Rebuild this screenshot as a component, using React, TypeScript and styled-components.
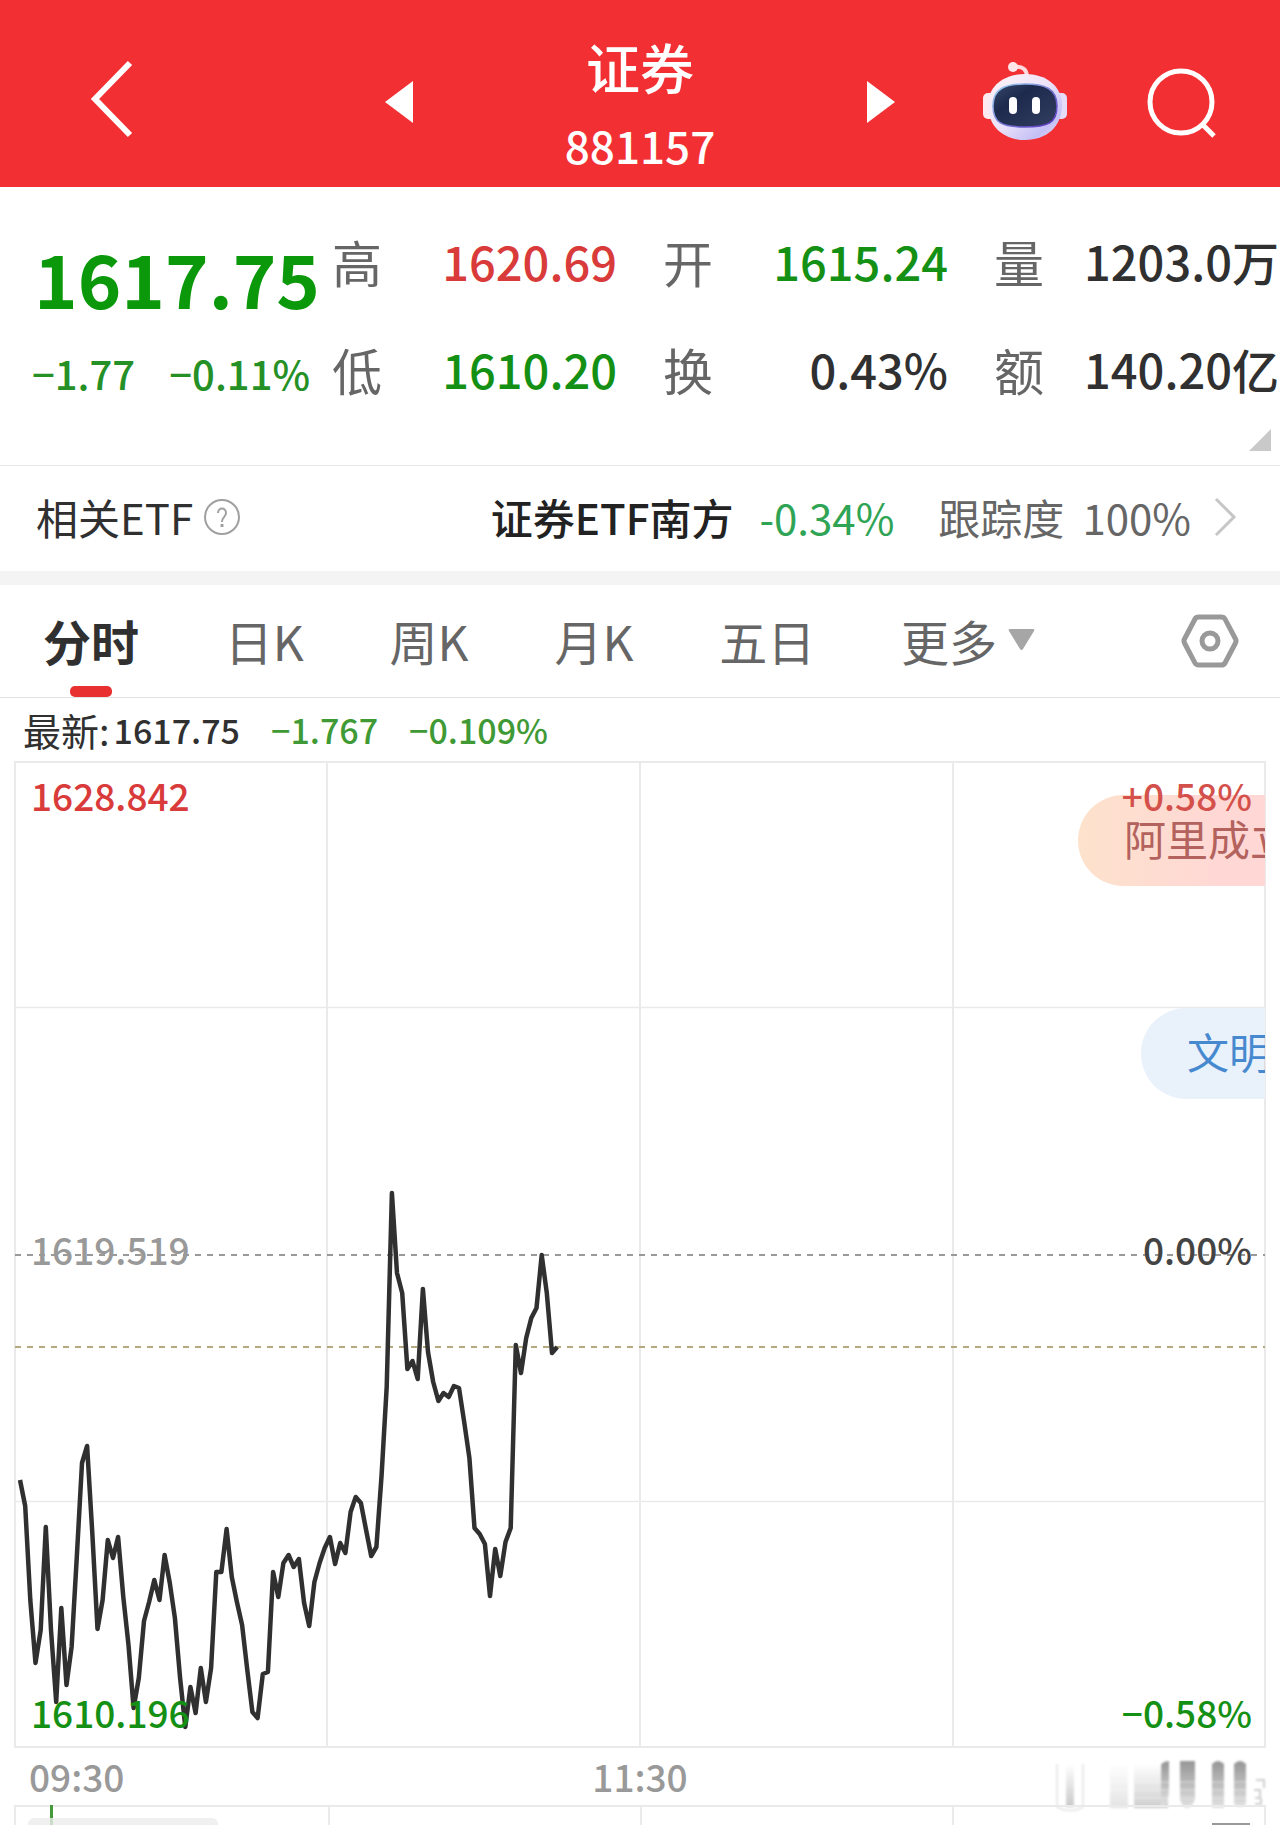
import React, { useState } from "react";
import styled, { createGlobalStyle } from "styled-components";

const color = {
  brand: "#f23034",
  ink: "#303030",
  label: "#666666",
  muted: "#999999",
  up: "#d93a3a",
  down: "#149014",
  downSoft: "#3f9a35",
  grid: "#eaeaea",
};

const GlobalStyle = createGlobalStyle`
  *, *::before, *::after { box-sizing: border-box; }
  body {
    margin: 0;
    background: #fff;
    color: ${color.ink};
    font-family: "Noto Sans CJK SC", "Noto Sans", sans-serif;
  }
  button {
    margin: 0;
    padding: 0;
    border: 0;
    background: none;
    color: inherit;
    font: inherit;
    cursor: pointer;
  }
  svg { display: block; }
  h1, p, dl, dt, dd { margin: 0; }
`;

const Page = styled.main`
  display: flex;
  flex-direction: column;
  overflow: hidden;
`;

/* ---------- header ---------- */

const Header = styled.header`
  display: grid;
  grid-template-columns: 1fr 454px 1fr;
  height: 187px;
  background: ${color.brand};
  color: #fff;
`;

const HeaderSide = styled.div<{ $end?: boolean }>`
  display: flex;
  align-items: center;
  justify-content: space-between;
  padding: ${(p) => (p.$end ? "16px 62px 0 0" : "16px 0 0 88px")};
`;

const BackButton = styled.button`
  padding-bottom: 6px;
`;

const TitleBlock = styled.div`
  display: flex;
  flex-direction: column;
  align-items: center;
  padding-top: 35px;
`;

const Title = styled.h1`
  font-size: 54px;
  line-height: 64px;
  font-weight: 500;
`;

const Code = styled.p`
  font-size: 44px;
  line-height: 64px;
  font-weight: 500;
  padding-top: 14px;
`;

/* ---------- quote ---------- */

const Quote = styled.section`
  position: relative;
  display: flex;
  height: 279px;
  padding: 42px 1px 0 34px;
  border-bottom: 1px solid #e8e8e8;
`;

const Summary = styled.div`
  width: 298px;
  flex: none;
`;

const Price = styled.p`
  font-size: 74px;
  line-height: 96px;
  font-weight: 700;
  color: #0b980b;
  white-space: nowrap;
`;

const Change = styled.p`
  display: flex;
  justify-content: space-between;
  padding: 20px 22px 0 0;
  margin-left: -2px;
  font-size: 40px;
  line-height: 56px;
  font-weight: 500;
  color: #259025;
  white-space: nowrap;
`;

const Stats = styled.dl`
  flex: 1;
  display: grid;
  grid-template-columns: repeat(3, 1fr);
  column-gap: 46px;
  row-gap: 44px;
  align-content: start;
`;

const Stat = styled.div`
  display: flex;
  justify-content: space-between;
  line-height: 64px;
  white-space: nowrap;
`;

const StatName = styled.dt`
  font-size: 50px;
  color: ${color.label};
`;

const StatValue = styled.dd<{ $tone: string }>`
  font-size: 47px;
  font-weight: 500;
  color: ${(p) => p.$tone};
`;

const Corner = styled.button`
  position: absolute;
  right: 9px;
  bottom: 14px;
`;

/* ---------- related ETF ---------- */

const EtfRow = styled.section`
  display: flex;
  align-items: center;
  justify-content: space-between;
  height: 105px;
  padding: 0 43px 3px 36px;
  font-size: 42px;
  line-height: 64px;
  white-space: nowrap;
`;

const EtfLabel = styled.div`
  display: flex;
  align-items: center;
  gap: 10px;
`;

const EtfLink = styled.a`
  display: flex;
  align-items: center;
  color: ${color.label};
  text-decoration: none;
`;

const EtfName = styled.span`
  font-weight: 500;
  color: #222;
  margin-right: 26px;
`;

const EtfChange = styled.span`
  color: #2fa455;
  margin-right: 44px;
`;

const EtfTrack = styled.span`
  display: flex;
  gap: 18px;
  margin-right: 22px;
`;

const Band = styled.div`
  height: 14px;
  background: #f4f4f4;
`;

/* ---------- tabs ---------- */

const Tabs = styled.nav`
  display: flex;
  align-items: stretch;
  height: 113px;
  padding: 0 41px 0 43px;
  border-bottom: 1px solid #e2e2e2;
  font-size: 48px;
  line-height: 64px;
  color: ${color.label};
  white-space: nowrap;
`;

const TabList = styled.div`
  display: flex;
  flex: 1;
  max-width: 992px;
  justify-content: space-between;
`;

const Tab = styled.button<{ $active: boolean }>`
  position: relative;
  display: flex;
  align-items: center;
  gap: 11px;
  padding-bottom: 2px;
  font-weight: ${(p) => (p.$active ? 700 : 400)};
  color: ${(p) => (p.$active ? color.ink : color.label)};

  &::after {
    content: "";
    display: ${(p) => (p.$active ? "block" : "none")};
    position: absolute;
    left: 50%;
    bottom: 0;
    width: 42px;
    height: 11px;
    margin-left: -21px;
    border-radius: 5px;
    background: #e83030;
  }
`;

const Settings = styled.button`
  display: flex;
  align-items: center;
  margin-left: auto;
`;

/* ---------- chart ---------- */

const Latest = styled.p`
  display: flex;
  align-items: center;
  gap: 31px;
  height: 63px;
  padding: 0 24px 0 23px;
  font-size: 34px;
  line-height: 56px;
  font-weight: 500;
  color: ${color.downSoft};
  white-space: nowrap;
`;

const LatestNow = styled.span`
  display: flex;
  align-items: center;
  gap: 4px;
  color: ${color.ink};
`;

const LatestLabel = styled.span`
  font-size: 38px;
  font-weight: 400;
`;

const ChartArea = styled.section`
  padding: 0 14px;
`;

const Plot = styled.div`
  position: relative;
  overflow: hidden;
`;

const PlotSvg = styled.svg`
  width: 100%;
  height: auto;
`;

const PlotLabel = styled.span<{ $tone: string; $right?: boolean; $at: "top" | "middle" | "bottom" }>`
  position: absolute;
  ${(p) => (p.$right ? "right: 14px;" : "left: 17px;")}
  ${(p) => ({ top: "top: 6px;", middle: "top: calc(50% - 34px);", bottom: "bottom: 8px;" })[p.$at]}
  font-size: 37px;
  line-height: 56px;
  font-weight: 500;
  color: ${(p) => p.$tone};
  white-space: nowrap;
`;

const Bullet = styled.span<{ $kind: "hot" | "cool" }>`
  position: absolute;
  right: 1px;
  top: ${(p) => (p.$kind === "hot" ? "34px" : "247px")};
  width: ${(p) => (p.$kind === "hot" ? "187px" : "124px")};
  height: 91px;
  padding-left: 46px;
  overflow: hidden;
  border-radius: 46px 0 0 46px;
  background: ${(p) =>
    p.$kind === "hot" ? "linear-gradient(90deg, #fde2cc, #ffd8d5 75%)" : "#e9f1fb"};
  color: ${(p) => (p.$kind === "hot" ? "#b3625e" : "#4789cf")};
  font-size: 42px;
  line-height: 86px;
  white-space: nowrap;
`;

const Axis = styled.div`
  position: relative;
  display: flex;
  justify-content: center;
  height: 57px;
  font-size: 37px;
  line-height: 56px;
  font-weight: 500;
  color: ${color.muted};
`;

const AxisStart = styled.time`
  position: absolute;
  left: 15px;
`;

const Smear = styled.svg`
  position: absolute;
  right: -8px;
  top: 8px;
`;

const VolumePanel = styled.div`
  display: grid;
  grid-template-columns: repeat(4, 1fr);
  height: 21px;
  border: solid ${color.grid};
  border-width: 2px 2px 0;
  position: relative;
`;

const VolumeCell = styled.div`
  & + & { border-left: 2px solid ${color.grid}; }
`;

const VolumeBar = styled.span`
  position: absolute;
  left: 34px;
  top: -2px;
  width: 3px;
  height: 21px;
  background: #459a3c;
`;

const VolumeTag = styled.span`
  position: absolute;
  left: 12px;
  top: 11px;
  width: 190px;
  height: 8px;
  border-radius: 6px 6px 0 0;
  background: rgba(236, 236, 236, 0.8);
`;

const VolumeMark = styled.span`
  position: absolute;
  right: 14px;
  bottom: 0;
  width: 38px;
  height: 3px;
  background: #999;
`;

const stats = [
  { name: "高", value: "1620.69", tone: color.up },
  { name: "开", value: "1615.24", tone: color.down },
  { name: "量", value: "1203.0万", tone: color.ink },
  { name: "低", value: "1610.20", tone: color.down },
  { name: "换", value: "0.43%", tone: color.ink },
  { name: "额", value: "140.20亿", tone: color.ink },
];

const tabs = ["分时", "日K", "周K", "月K", "五日", "更多"];

/* One height per minute since the open, measured down from the top of the plot. */
const minutes = [
  719, 745, 839, 902, 869, 766, 869, 941, 847, 924, 886, 796, 702, 685, 772, 868, 839, 779, 797, 776,
  836, 884, 947, 917, 860, 841, 819, 839, 794, 822, 857, 917, 966, 926, 952, 907, 941, 907, 811, 811,
  768, 816, 841, 864, 909, 951, 957, 913, 911, 811, 836, 802, 794, 806, 798, 842, 865, 821, 802, 787,
  776, 803, 782, 792, 751, 736, 742, 769, 795, 786, 714, 626, 432, 512, 532, 608, 600, 618, 528, 591,
  621, 640, 632, 636, 625, 627, 661, 697, 767, 773, 783, 835, 788, 815, 781, 767, 584, 612, 577, 557,
  547, 494, 532, 592, 586,
];

const linePoints = minutes.map((y, i) => `${(6 + i * 5.165).toFixed(1)},${y}`).join(" ");

const Robot = () => (
  <svg width="86" height="80" viewBox="0 0 86 80" aria-hidden="true">
    <defs>
      <linearGradient id="shell" x1="0" y1="0" x2="1" y2="1">
        <stop offset="0" stopColor="#fff3f6" />
        <stop offset="0.5" stopColor="#ebe2fa" />
        <stop offset="0.8" stopColor="#c3c0f5" />
        <stop offset="1" stopColor="#f3e3f6" />
      </linearGradient>
      <linearGradient id="visor" x1="0" y1="0" x2="1" y2="1">
        <stop offset="0" stopColor="#35466b" />
        <stop offset="0.35" stopColor="#1d2a4d" />
        <stop offset="1" stopColor="#343f60" />
      </linearGradient>
      <linearGradient id="rim" x1="0" y1="0" x2="1" y2="1">
        <stop offset="0" stopColor="#9bd3ef" />
        <stop offset="1" stopColor="#5a2fc0" />
      </linearGradient>
    </defs>
    <path d="M33 5c8-1 12 3 12 10" fill="none" stroke="#ffd9de" strokeWidth="4" />
    <circle cx="31" cy="5" r="5" fill="#ffe6ea" />
    <rect x="1" y="31" width="12" height="26" rx="5" fill="#ffe9f0" />
    <rect x="73" y="31" width="12" height="26" rx="5" fill="#e4dcf8" />
    <path d="M43 12c21 0 37 12 37 31 0 21-15 35-37 35S6 64 6 43c0-19 16-31 37-31z" fill="url(#shell)" />
    <path
      d="M43 22c19 0 32 4 32 22 0 17-9 21-32 21s-32-4-32-21c0-18 13-22 32-22z"
      fill="url(#visor)"
      stroke="url(#rim)"
      strokeWidth="1.500"
    />
    <rect x="27" y="35" width="8" height="17" rx="4" fill="#fff" />
    <rect x="50" y="35" width="8" height="17" rx="4" fill="#fff" />
  </svg>
);

const HeaderTools = styled.div`
  display: flex;
  align-items: center;
  gap: 78px;
`;

export default function App() {
  const [active, setActive] = useState("分时");

  return (
    <>
      <GlobalStyle />
      <Page>
        <Header>
          <HeaderSide>
            <BackButton type="button" aria-label="返回">
              <svg width="46" height="78" viewBox="0 0 46 78">
                <path d="M42 3 7 39l35 36" fill="none" stroke="#fff" strokeWidth="6" />
              </svg>
            </BackButton>
            <button type="button" aria-label="上一个">
              <svg width="28" height="42" viewBox="0 0 28 42">
                <path d="M28 0v42L0 21z" fill="#fff" />
              </svg>
            </button>
          </HeaderSide>
          <TitleBlock>
            <Title>证券</Title>
            <Code>881157</Code>
          </TitleBlock>
          <HeaderSide $end>
            <button type="button" aria-label="下一个">
              <svg width="28" height="42" viewBox="0 0 28 42">
                <path d="M0 0v42l28-21z" fill="#fff" />
              </svg>
            </button>
            <HeaderTools>
              <button type="button" aria-label="智能助手">
                <Robot />
              </button>
              <button type="button" aria-label="搜索">
                <svg width="72" height="72" viewBox="0 0 72 72">
                  <circle cx="35" cy="36" r="31" fill="none" stroke="#fff" strokeWidth="5" />
                  <path d="m56 58 12 12" fill="none" stroke="#fff" strokeWidth="5" />
                </svg>
              </button>
            </HeaderTools>
          </HeaderSide>
        </Header>

        <Quote>
          <Summary>
            <Price>1617.75</Price>
            <Change>
              <span>−1.77</span>
              <span>−0.11%</span>
            </Change>
          </Summary>
          <Stats>
            {stats.map((s) => (
              <Stat key={s.name}>
                <StatName>{s.name}</StatName>
                <StatValue $tone={s.tone}>{s.value}</StatValue>
              </Stat>
            ))}
          </Stats>
          <Corner type="button" aria-label="展开">
            <svg width="22" height="22" viewBox="0 0 22 22">
              <path d="M22 0v22H0z" fill="#c9c9c9" />
            </svg>
          </Corner>
        </Quote>

        <EtfRow>
          <EtfLabel>
            <span>相关ETF</span>
            <button type="button" aria-label="说明">
              <svg width="38" height="38" viewBox="0 0 38 38" fill="none" stroke="#a0a0a0" strokeWidth="2">
                <circle cx="19" cy="19" r="17" />
                <path d="M15 15c0-6 8-6 8 0 0 4-4 4-4 9" />
                <path d="M19 26v3" strokeWidth="3" />
              </svg>
            </button>
          </EtfLabel>
          <EtfLink href="#etf">
            <EtfName>证券ETF南方</EtfName>
            <EtfChange>-0.34%</EtfChange>
            <EtfTrack>
              <span>跟踪度</span>
              <span>100%</span>
            </EtfTrack>
            <svg width="24" height="40" viewBox="0 0 24 40" aria-hidden="true">
              <path d="m3 2 18 18L3 38" fill="none" stroke="#c6c6c6" strokeWidth="3" />
            </svg>
          </EtfLink>
        </EtfRow>
        <Band />

        <Tabs>
          <TabList>
            {tabs.map((t) => (
              <Tab key={t} type="button" $active={t === active} onClick={() => setActive(t)}>
                {t}
                {t === "更多" && (
                  <svg width="27" height="23" viewBox="0 0 27 23" aria-hidden="true">
                    <path d="M2 0h23q2 0 1 2L15 20q-1.500 2-3 0L1 2Q0 0 2 0z" fill="#a6a6a6" />
                  </svg>
                )}
              </Tab>
            ))}
          </TabList>
          <Settings type="button" aria-label="设置">
            <svg width="58" height="54" viewBox="0 0 58 54" fill="none" stroke="#999" strokeWidth="5">
              <path
                d="M18 3h22q3 0 4 2l10 19q2 3 0 6L44 49q-1 2-4 2H18q-3 0-4-2L4 30q-2-3 0-6L14 5q1-2 4-2z"
                strokeLinejoin="round"
              />
              <circle cx="29" cy="27" r="8" />
            </svg>
          </Settings>
        </Tabs>

        <Latest>
          <LatestNow>
            <LatestLabel>最新:</LatestLabel>
            1617.75
          </LatestNow>
          <span>−1.767</span>
          <span>−0.109%</span>
        </Latest>

        <ChartArea>
          <Plot>
            <PlotSvg viewBox="0 0 1252 987" role="img" aria-label="分时走势">
              <g fill="none" stroke={color.grid} strokeWidth="2">
                <rect x="1" y="1" width="1250" height="985" />
                <path d="M313 1v985M626 1v985M939 1v985" />
                <path d="M1 246.500h1250M1 740.500h1250" strokeWidth="1.500" />
              </g>
              <path d="M1 494h1250" stroke="#999" strokeWidth="2" strokeDasharray="6 6" />
              <path d="M1 586h1250" stroke="#b3a87e" strokeWidth="2" strokeDasharray="6 6" />
              <polyline
                points={linePoints}
                fill="none"
                stroke="#303030"
                strokeWidth="4.500"
                strokeLinejoin="round"
              />
            </PlotSvg>
            <Bullet $kind="hot">阿里成立</Bullet>
            <Bullet $kind="cool">文明</Bullet>
            <PlotLabel $at="top" $tone={color.up}>1628.842</PlotLabel>
            <PlotLabel $at="middle" $tone={color.muted}>1619.519</PlotLabel>
            <PlotLabel $at="bottom" $tone={color.down}>1610.196</PlotLabel>
            <PlotLabel $at="top" $right $tone="#d4504b">+0.58%</PlotLabel>
            <PlotLabel $at="middle" $right $tone="#444">0.00%</PlotLabel>
            <PlotLabel $at="bottom" $right $tone={color.down}>−0.58%</PlotLabel>
          </Plot>

          <Axis>
            <AxisStart>09:30</AxisStart>
            <time>11:30</time>
            <Smear width="230" height="62" viewBox="0 0 230 62" aria-hidden="true">
              <defs>
                <linearGradient id="fall" x1="0" y1="0" x2="0" y2="1">
                  <stop offset="0" stopColor="#969696" />
                  <stop offset="1" stopColor="#e2e2e2" />
                </linearGradient>
                <linearGradient id="rise" x1="0" y1="0" x2="0" y2="1">
                  <stop offset="0" stopColor="#fff" />
                  <stop offset="1" stopColor="#c9c9c9" />
                </linearGradient>
                <filter id="soft" x="-20%" y="-20%" width="140%" height="140%">
                  <feGaussianBlur stdDeviation="1" />
                </filter>
              </defs>
              <rect x="6" y="4" width="212" height="56" fill="#fff" />
              <g filter="url(#soft)">
                <path d="M13 8v43q13 7 26 0V8" fill="#fff" stroke="#e8e8e8" strokeWidth="2" />
                <rect x="22" y="8" width="8" height="43" fill="url(#rise)" />
                <rect x="66" y="8" width="18" height="44" fill="url(#rise)" opacity="0.5" />
                <rect x="90" y="8" width="34" height="44" fill="url(#rise)" opacity="0.9" />
                <path d="M117 8q4-3 8-3v30q-1 14-8 16z" fill="url(#fall)" />
                <path d="M136 5h15v38q-3 9-8 9t-7-9z" fill="url(#fall)" />
                <path d="M168 8q6-6 12 0v44h-12z" fill="url(#fall)" />
                <path d="M190 8q6-6 12 0v40q-6 6-12 0z" fill="url(#fall)" />
                <path d="M50 26h160M50 34h160M90 42h120" stroke="#fff" strokeWidth="1" opacity="0.5" />
                <path d="M212 24h8v8m-10 2h6v8h-5m0 6h6v-6" fill="none" stroke="#cfcfcf" strokeWidth="2" />
              </g>
            </Smear>
          </Axis>

          <VolumePanel>
            <VolumeCell />
            <VolumeCell />
            <VolumeCell />
            <VolumeCell />
            <VolumeBar />
            <VolumeTag />
            <VolumeMark />
          </VolumePanel>
        </ChartArea>
      </Page>
    </>
  );
}
